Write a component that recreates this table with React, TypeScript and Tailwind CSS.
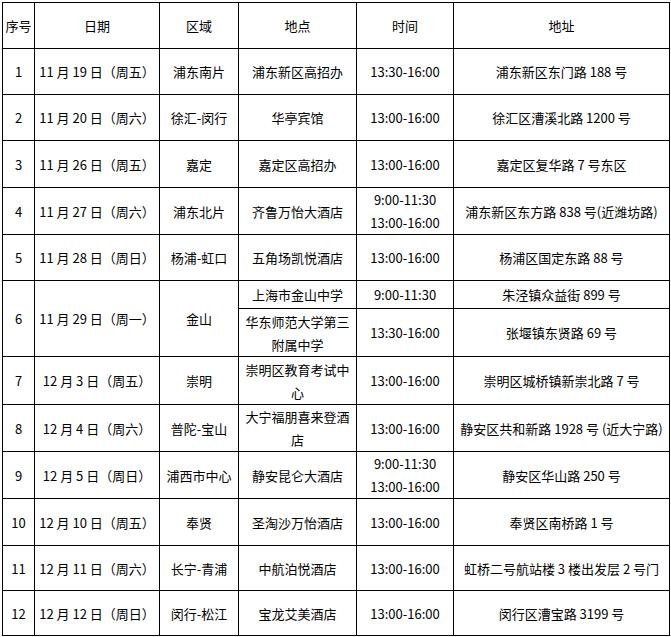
import React from "react";

type Row = {
  n: string;
  date: string;
  area: string;
  place: string;
  time: string[];
  addr: string;
  h: number;
};

const rows: Row[] = [
  { n: "1", date: "11 月 19 日（周五）", area: "浦东南片", place: "浦东新区高招办", time: ["13:30-16:00"], addr: "浦东新区东门路 188 号", h: 46 },
  { n: "2", date: "11 月 20 日（周六）", area: "徐汇-闵行", place: "华亭宾馆", time: ["13:00-16:00"], addr: "徐汇区漕溪北路 1200 号", h: 46 },
  { n: "3", date: "11 月 26 日（周五）", area: "嘉定", place: "嘉定区高招办", time: ["13:00-16:00"], addr: "嘉定区复华路 7 号东区", h: 47 },
  { n: "4", date: "11 月 27 日（周六）", area: "浦东北片", place: "齐鲁万怡大酒店", time: ["9:00-11:30", "13:00-16:00"], addr: "浦东新区东方路 838 号(近潍坊路)", h: 46 },
  { n: "5", date: "11 月 28 日（周日）", area: "杨浦-虹口", place: "五角场凯悦酒店", time: ["13:00-16:00"], addr: "杨浦区国定东路 88 号", h: 46 },
];

const rows2: Row[] = [
  { n: "7", date: "12 月 3 日（周五）", area: "崇明", place: "崇明区教育考试中心", time: ["13:00-16:00"], addr: "崇明区城桥镇新崇北路 7 号", h: 48 },
  { n: "8", date: "12 月 4 日（周六）", area: "普陀-宝山", place: "大宁福朋喜来登酒店", time: ["13:00-16:00"], addr: "静安区共和新路 1928 号 (近大宁路)", h: 47 },
  { n: "9", date: "12 月 5 日（周日）", area: "浦西市中心", place: "静安昆仑大酒店", time: ["9:00-11:30", "13:00-16:00"], addr: "静安区华山路 250 号", h: 47 },
  { n: "10", date: "12 月 10 日（周五）", area: "奉贤", place: "圣淘沙万怡酒店", time: ["13:00-16:00"], addr: "奉贤区南桥路 1 号", h: 47 },
  { n: "11", date: "12 月 11 日（周六）", area: "长宁-青浦", place: "中航泊悦酒店", time: ["13:00-16:00"], addr: "虹桥二号航站楼 3 楼出发层 2 号门", h: 45 },
  { n: "12", date: "12 月 12 日（周日）", area: "闵行-松江", place: "宝龙艾美酒店", time: ["13:00-16:00"], addr: "闵行区漕宝路 3199 号", h: 45 },
];

const td = "border border-black text-center align-middle px-[5px] py-0";

function DataRow({ r }: { r: Row }) {
  return (
    <tr style={{ height: r.h }}>
      <td className="border border-black text-center align-middle p-0">{r.n}</td>
      <td className="border border-black text-center align-middle p-0 whitespace-nowrap">{r.date}</td>
      <td className="border border-black text-center align-middle p-0 whitespace-nowrap">{r.area}</td>
      <td className={td}>{r.place}</td>
      <td className="border border-black text-center align-middle p-0">
        {r.time.map((t) => (
          <div key={t}>{t}</div>
        ))}
      </td>
      <td className="border border-black text-center align-middle p-0 whitespace-nowrap">{r.addr}</td>
    </tr>
  );
}

export default function App() {
  return (
    <div className="bg-white w-[671px] h-[637px] pt-[2px] pl-[2px]">
      <table
        className="border-collapse table-fixed w-[668px] text-[13px] leading-[23px] text-black"
        style={{ fontFamily: '"Noto Sans CJK SC", "Noto Sans", sans-serif' }}
      >
        <colgroup>
          <col className="w-[32px]" />
          <col className="w-[125px]" />
          <col className="w-[79px]" />
          <col className="w-[118px]" />
          <col className="w-[97px]" />
          <col className="w-[216px]" />
        </colgroup>
        <tbody>
          <tr style={{ height: 46 }}>
            <td className="border border-black text-center align-middle p-0 whitespace-nowrap">序号</td>
            <td className="border border-black text-center align-middle p-0">日期</td>
            <td className="border border-black text-center align-middle p-0">区域</td>
            <td className="border border-black text-center align-middle p-0">地点</td>
            <td className="border border-black text-center align-middle p-0">时间</td>
            <td className="border border-black text-center align-middle p-0">地址</td>
          </tr>
          {rows.map((r) => (
            <DataRow key={r.n} r={r} />
          ))}
          <tr style={{ height: 28 }}>
            <td rowSpan={2} className="border border-black text-center align-middle p-0">6</td>
            <td rowSpan={2} className="border border-black text-center align-middle p-0 whitespace-nowrap">11 月 29 日（周一）</td>
            <td rowSpan={2} className="border border-black text-center align-middle p-0">金山</td>
            <td className={td}>上海市金山中学</td>
            <td className="border border-black text-center align-middle p-0">9:00-11:30</td>
            <td className="border border-black text-center align-middle p-0">朱泾镇众益街 899 号</td>
          </tr>
          <tr style={{ height: 48 }}>
            <td className={td}>华东师范大学第三附属中学</td>
            <td className="border border-black text-center align-middle p-0">13:30-16:00</td>
            <td className="border border-black text-center align-middle p-0">张堰镇东贤路 69 号</td>
          </tr>
          {rows2.map((r) => (
            <DataRow key={r.n} r={r} />
          ))}
        </tbody>
      </table>
    </div>
  );
}
